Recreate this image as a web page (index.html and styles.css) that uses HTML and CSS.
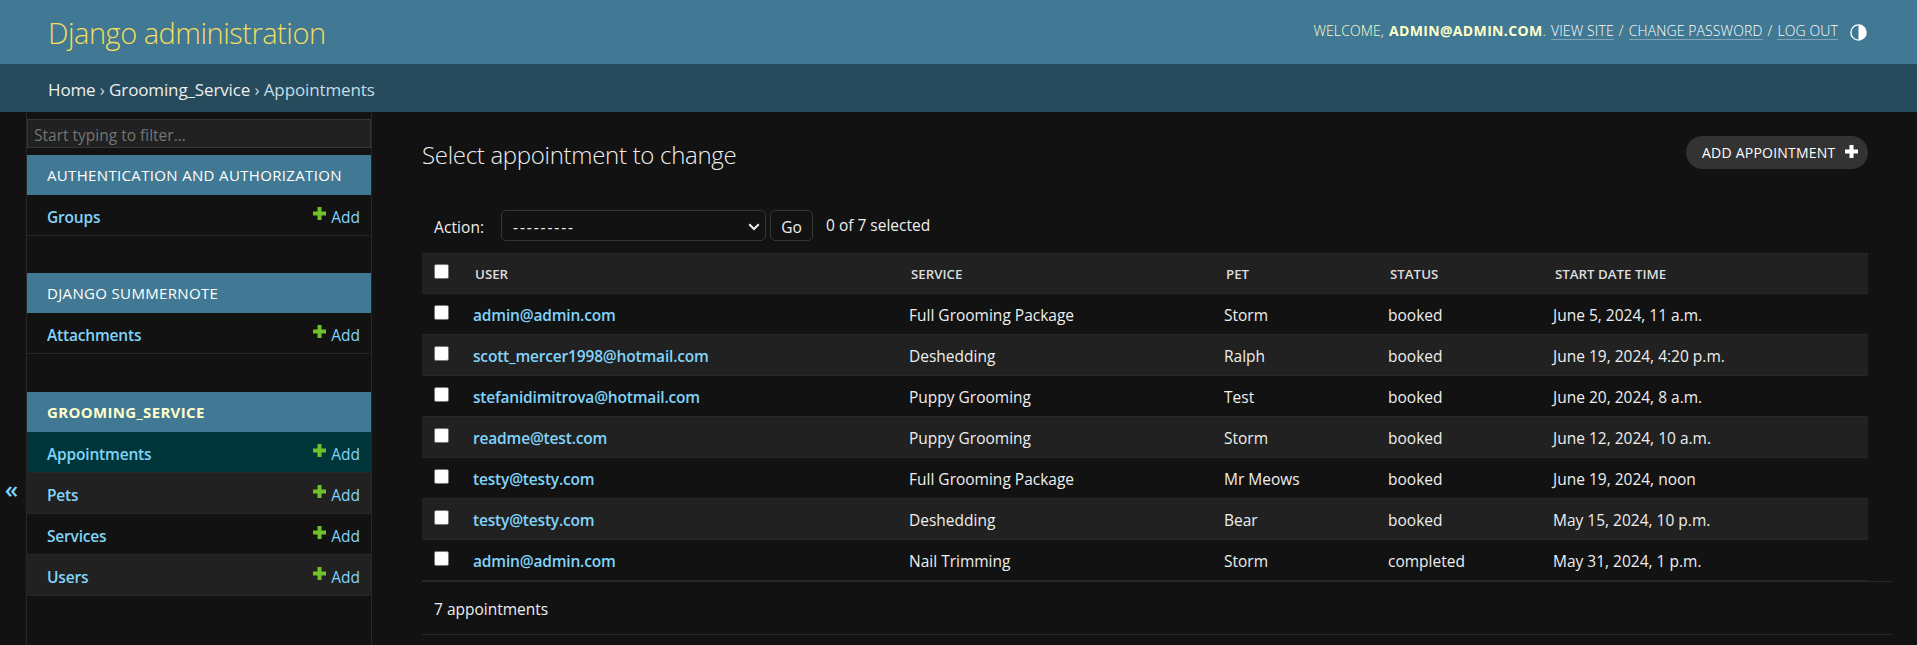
FILE: index.html
```html
<!DOCTYPE html>
<html lang="en">
<head>
<meta charset="utf-8">
<title>Select appointment to change | Django site admin</title>
<link rel="stylesheet" href="styles.css">
</head>
<body>
<svg class="sprite" width="0" height="0" aria-hidden="true">
  <symbol id="plus" viewBox="0 0 13 13"><path d="M4.500 0h4v4.500H13v4H8.500V13h-4V8.500H0v-4h4.500z" fill="currentColor"/></symbol>
</svg>
<header class="header">
  <h1 class="branding">Django administration</h1>
  <div class="user-tools">
    <span class="welcome">Welcome,</span> <strong class="account">admin@admin.com</strong><span class="dot">.</span>
    <a class="tool">View site</a><span class="slash">/</span><a class="tool tool-pass">Change password</a><span class="slash">/</span><a class="tool">Log out</a>
    <svg class="theme" viewBox="0 0 17 17"><circle cx="8.500" cy="8.500" r="7.600" fill="none" stroke="#fff" stroke-width="1.400"/><path d="M8.500 1a7.500 7.500 0 0 1 0 15z" fill="#fff"/></svg>
  </div>
</header>
<nav class="breadcrumbs"><a>Home</a> › <a>Grooming_Service</a> › Appointments</nav>
<div class="shell">
  <button class="toggle">«</button>
  <aside class="sidebar">
    <input class="filter" placeholder="Start typing to filter...">
    <section class="module">
      <h2 class="caption">Authentication and Authorization</h2>
      <div class="model"><a class="name">Groups</a><a class="add"><svg class="plus"><use href="#plus"/></svg>Add</a></div>
    </section>
    <section class="module">
      <h2 class="caption">Django Summernote</h2>
      <div class="model"><a class="name">Attachments</a><a class="add"><svg class="plus"><use href="#plus"/></svg>Add</a></div>
    </section>
    <section class="module">
      <h2 class="caption current">Grooming_Service</h2>
      <div class="model selected"><a class="name">Appointments</a><a class="add"><svg class="plus"><use href="#plus"/></svg>Add</a></div>
      <div class="model alt"><a class="name">Pets</a><a class="add"><svg class="plus"><use href="#plus"/></svg>Add</a></div>
      <div class="model"><a class="name">Services</a><a class="add"><svg class="plus"><use href="#plus"/></svg>Add</a></div>
      <div class="model alt"><a class="name">Users</a><a class="add"><svg class="plus"><use href="#plus"/></svg>Add</a></div>
    </section>
  </aside>
  <main class="content">
    <div class="title-row">
      <h1 class="title">Select appointment to change</h1>
      <a class="add-button"><span>Add appointment</span><svg class="plus"><use href="#plus"/></svg></a>
    </div>
    <div class="actions">
      <span class="action-label">Action:</span>
      <div class="select"><span class="dashes">---------</span><svg class="chevron" viewBox="0 0 12 8"><path d="M1.200 1.200L6 6l4.800-4.800" fill="none" stroke="#eee" stroke-width="2"/></svg></div>
      <button class="go">Go</button>
      <span class="counter">0 of 7 selected</span>
    </div>
    <table class="results">
      <colgroup><col class="c-check"><col class="c-user"><col class="c-service"><col class="c-pet"><col class="c-status"><col></colgroup>
      <thead><tr><th><i class="box"></i></th><th>User</th><th>Service</th><th>Pet</th><th>Status</th><th>Start date time</th></tr></thead>
      <tbody>
        <tr><td><i class="box"></i></td><th>admin@admin.com</th><td>Full Grooming Package</td><td>Storm</td><td>booked</td><td>June 5, 2024, 11 a.m.</td></tr>
        <tr><td><i class="box"></i></td><th>scott_mercer1998@hotmail.com</th><td>Deshedding</td><td>Ralph</td><td>booked</td><td>June 19, 2024, 4:20 p.m.</td></tr>
        <tr><td><i class="box"></i></td><th>stefanidimitrova@hotmail.com</th><td>Puppy Grooming</td><td>Test</td><td>booked</td><td>June 20, 2024, 8 a.m.</td></tr>
        <tr><td><i class="box"></i></td><th>readme@test.com</th><td>Puppy Grooming</td><td>Storm</td><td>booked</td><td>June 12, 2024, 10 a.m.</td></tr>
        <tr><td><i class="box"></i></td><th>testy@testy.com</th><td>Full Grooming Package</td><td>Mr Meows</td><td>booked</td><td>June 19, 2024, noon</td></tr>
        <tr><td><i class="box"></i></td><th>testy@testy.com</th><td>Deshedding</td><td>Bear</td><td>booked</td><td>May 15, 2024, 10 p.m.</td></tr>
        <tr><td><i class="box"></i></td><th>admin@admin.com</th><td>Nail Trimming</td><td>Storm</td><td>completed</td><td>May 31, 2024, 1 p.m.</td></tr>
      </tbody>
    </table>
    <p class="paginator">7 appointments</p>
  </main>
</div>
</body>
</html>
```

FILE: styles.css
```css
* { box-sizing: border-box; }
body {
  margin: 0;
  height: 645px;
  overflow: hidden;
  background: #121212;
  color: #eee;
  font: 15.5px/24px "Open Sans", "Noto Sans", sans-serif;
}
h1, h2, p { margin: 0; }
button, input { font: inherit; }
.sprite { position: absolute; }

.header {
  display: flex;
  justify-content: space-between;
  height: 64px;
  padding: 0 50px 0 48px;
  background: #417893;
}
.branding {
  padding-top: 13px;
  color: #f5dd5d;
  font-size: 29px;
  font-weight: 300;
  letter-spacing: -0.49px;
  line-height: 40px;
  white-space: nowrap;
}
.user-tools {
  display: flex;
  align-items: baseline;
  padding-top: 19px;
  color: #ffc;
  font-size: 14px;
  font-weight: 300;
  letter-spacing: 0.12px;
  text-transform: uppercase;
  white-space: nowrap;
}
.account { margin-left: 5px; font-weight: 700; letter-spacing: 0.35px; }
.dot { margin-right: 5px; }
.tool {
  height: 21px;
  border-bottom: 1px solid #7fa4b6;
  color: #fff;
  line-height: 24px;
}
.slash { margin: 0 5px; }
.theme { width: 17px; height: 17px; margin-left: 12px; align-self: flex-start; margin-top: 5px; }

.breadcrumbs {
  height: 48px;
  padding: 14px 48px 0;
  background: #264b5d;
  color: #c4dce8;
  font-size: 17px;
  letter-spacing: -0.13px;
}
.breadcrumbs a { color: #eee; }

.shell { display: flex; height: 533px; }
.toggle {
  display: flex;
  justify-content: center;
  align-items: flex-start;
  width: 26px;
  padding: 365px 3px 0 0;
  background: none;
  border: 0;
  color: #81d4fa;
  font-size: 24px;
  font-weight: 600;
}
.sidebar {
  width: 346px;
  border: solid #272727;
  border-width: 0 1px;
  padding-top: 7px;
}
.filter {
  display: block;
  width: 344px;
  height: 29px;
  margin-bottom: 7px;
  padding: 3px 6px 0;
  border: 1px solid #353535;
  background: #212121;
  color: #eee;
}
.filter::placeholder { color: #757575; opacity: 1; }
.module { margin-bottom: 37px; }
.module + .module { margin-bottom: 38px; }
.caption {
  height: 40px;
  padding: 8px 20px 0;
  background: #417893;
  color: #fff;
  font-size: 15px;
  font-weight: 400;
  letter-spacing: 0.34px;
  text-transform: uppercase;
  white-space: nowrap;
}
.current { color: #ffc; font-weight: 700; }
.model {
  display: flex;
  justify-content: space-between;
  height: 41px;
  padding: 10px 11px 0 20px;
  border-bottom: 1px solid #272727;
  color: #81d4fa;
}
.alt { background: #212121; }
.selected { background: #00363a; }
.name { font-weight: 600; letter-spacing: -0.18px; }
.add { display: flex; }
.plus { width: 13px; height: 13px; }
.add .plus { margin: 2px 5px 0 0; color: #70bf2b; }

.content { flex: 1; padding: 24px 24px 0 50px; }
.title-row {
  display: flex;
  justify-content: space-between;
  height: 74px;
  padding-right: 25px;
}
.title {
  padding-top: 4px;
  font-size: 24px;
  font-weight: 300;
  letter-spacing: -0.3px;
  line-height: 30px;
  white-space: nowrap;
}
.add-button {
  display: flex;
  justify-content: space-between;
  width: 182px;
  height: 33px;
  padding: 5px 10px 0 16px;
  border-radius: 17px;
  background: #333;
  color: #fff;
  font-size: 14px;
  letter-spacing: 0.22px;
  text-transform: uppercase;
  white-space: nowrap;
}
.add-button .plus { margin-top: 4px; }
.actions { display: flex; height: 43px; padding-left: 12px; }
.action-label { width: 67px; padding-top: 5px; letter-spacing: 0.1px; }
.select {
  display: flex;
  align-items: center;
  justify-content: space-between;
  width: 265px;
  height: 31px;
  padding: 2px 5px 0 11px;
  border: 1px solid #353535;
  border-radius: 5px;
}
.dashes { letter-spacing: 1.9px; }
.chevron { width: 12px; height: 8px; }
.go {
  width: 43px;
  height: 31px;
  margin: 0 13px 0 4px;
  padding: 3px 0 0;
  border: 1px solid #353535;
  border-radius: 5px;
  background: none;
  color: #eee;
}
.counter { padding-top: 3px; }
.results {
  width: 1446px;
  table-layout: fixed;
  border-spacing: 0;
}
.c-check { width: 41px; }
.c-user { width: 436px; }
.c-service { width: 315px; }
.c-pet { width: 164px; }
.c-status { width: 165px; }
.results th, .results td {
  height: 41px;
  padding: 9px 10px 0;
  border-bottom: 1px solid #272727;
  text-align: left;
  vertical-align: top;
  white-space: nowrap;
}
.results thead th {
  padding: 8px 12px 0;
  border-top: 1px solid #272727;
  background: #212121;
  color: #ddd;
  font-size: 13.3px;
  font-weight: 600;
  text-transform: uppercase;
}
.results tbody tr:nth-child(even) { background: #212121; }
.results tbody th { color: #81d4fa; font-weight: 600; letter-spacing: -0.18px; }
.results .box {
  display: block;
  width: 15px;
  height: 15px;
  margin: 2px 0 0 2px;
  border: 1px solid #767676;
  border-radius: 2px;
  background: #fff;
}
.results thead .box { margin: 2px 0 0; }
.paginator {
  height: 54px;
  padding: 15px 12px 0;
  border: solid #272727;
  border-width: 1px 0;
}
```
